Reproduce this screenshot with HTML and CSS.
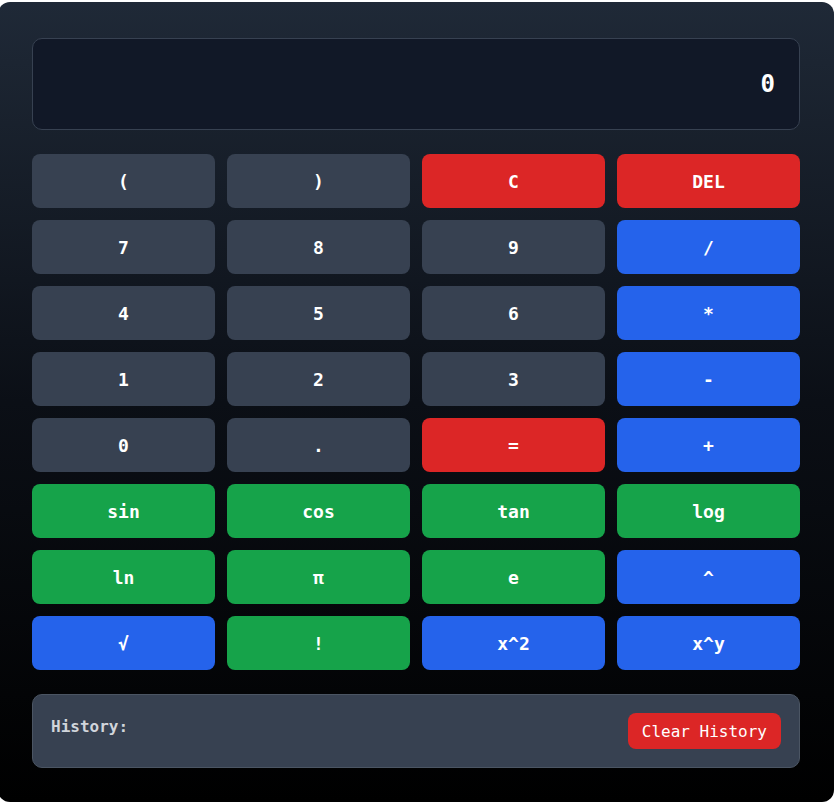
FILE: index.html
```html
<!DOCTYPE html>
<html>
<head>
<meta charset="utf-8">
<link rel="stylesheet" href="styles.css">
</head>
<body>
<div class="calc">
  <div class="display">0</div>
  <div class="keys">
    <button class="key gray">(</button>
    <button class="key gray">)</button>
    <button class="key red">C</button>
    <button class="key red">DEL</button>
    <button class="key gray">7</button>
    <button class="key gray">8</button>
    <button class="key gray">9</button>
    <button class="key blue">/</button>
    <button class="key gray">4</button>
    <button class="key gray">5</button>
    <button class="key gray">6</button>
    <button class="key blue">*</button>
    <button class="key gray">1</button>
    <button class="key gray">2</button>
    <button class="key gray">3</button>
    <button class="key blue">-</button>
    <button class="key gray">0</button>
    <button class="key gray">.</button>
    <button class="key red">=</button>
    <button class="key blue">+</button>
    <button class="key green">sin</button>
    <button class="key green">cos</button>
    <button class="key green">tan</button>
    <button class="key green">log</button>
    <button class="key green">ln</button>
    <button class="key green">π</button>
    <button class="key green">e</button>
    <button class="key blue">^</button>
    <button class="key blue">√</button>
    <button class="key green">!</button>
    <button class="key blue">x^2</button>
    <button class="key blue">x^y</button>
  </div>
  <div class="history">
    <div class="history-label">History:</div>
    <button class="clear">Clear History</button>
  </div>
</div>
</body>
</html>
```
FILE: styles.css
```css
html, body {
  margin: 0;
  padding: 0;
  background: #ffffff;
  overflow: hidden;
}
body {
  font-family: "DejaVu Sans Mono", "Liberation Mono", monospace;
}
.calc {
  box-sizing: border-box;
  width: 836px;
  margin: 2px 0 0 -2px;
  padding: 36px 34px 34px 34px;
  border-radius: 12px;
  background: linear-gradient(to bottom, #1f2937 0%, #0b0f16 50%, #000000 100%);
}
.display {
  box-sizing: border-box;
  height: 92px;
  background: #111827;
  border: 1px solid #374151;
  border-radius: 10px;
  display: flex;
  align-items: center;
  justify-content: flex-end;
  padding: 0 24px;
  color: #ffffff;
  font-weight: bold;
  font-size: 24px;
}
.keys {
  margin-top: 24px;
  display: grid;
  grid-template-columns: repeat(4, 1fr);
  gap: 12px;
}
.key {
  height: 54px;
  border: none;
  border-radius: 8px;
  color: #ffffff;
  font-family: "DejaVu Sans Mono", "Liberation Mono", monospace;
  font-weight: bold;
  font-size: 18px;
  padding: 0;
}
.gray { background: #374151; }
.red { background: #dc2626; }
.blue { background: #2563eb; }
.green { background: #16a34a; }
.history {
  margin-top: 24px;
  box-sizing: border-box;
  height: 74px;
  background: #374151;
  border: 1px solid #4b5563;
  border-radius: 10px;
  padding: 18px;
  display: flex;
  justify-content: space-between;
  align-items: flex-start;
}
.history-label {
  color: #d1d5db;
  font-weight: bold;
  font-size: 16px;
  line-height: 28px;
}
.clear {
  height: 36px;
  border: none;
  border-radius: 8px;
  background: #dc2626;
  color: #ffffff;
  font-family: "DejaVu Sans Mono", "Liberation Mono", monospace;
  font-size: 16px;
  padding: 0 14px;
}
```
